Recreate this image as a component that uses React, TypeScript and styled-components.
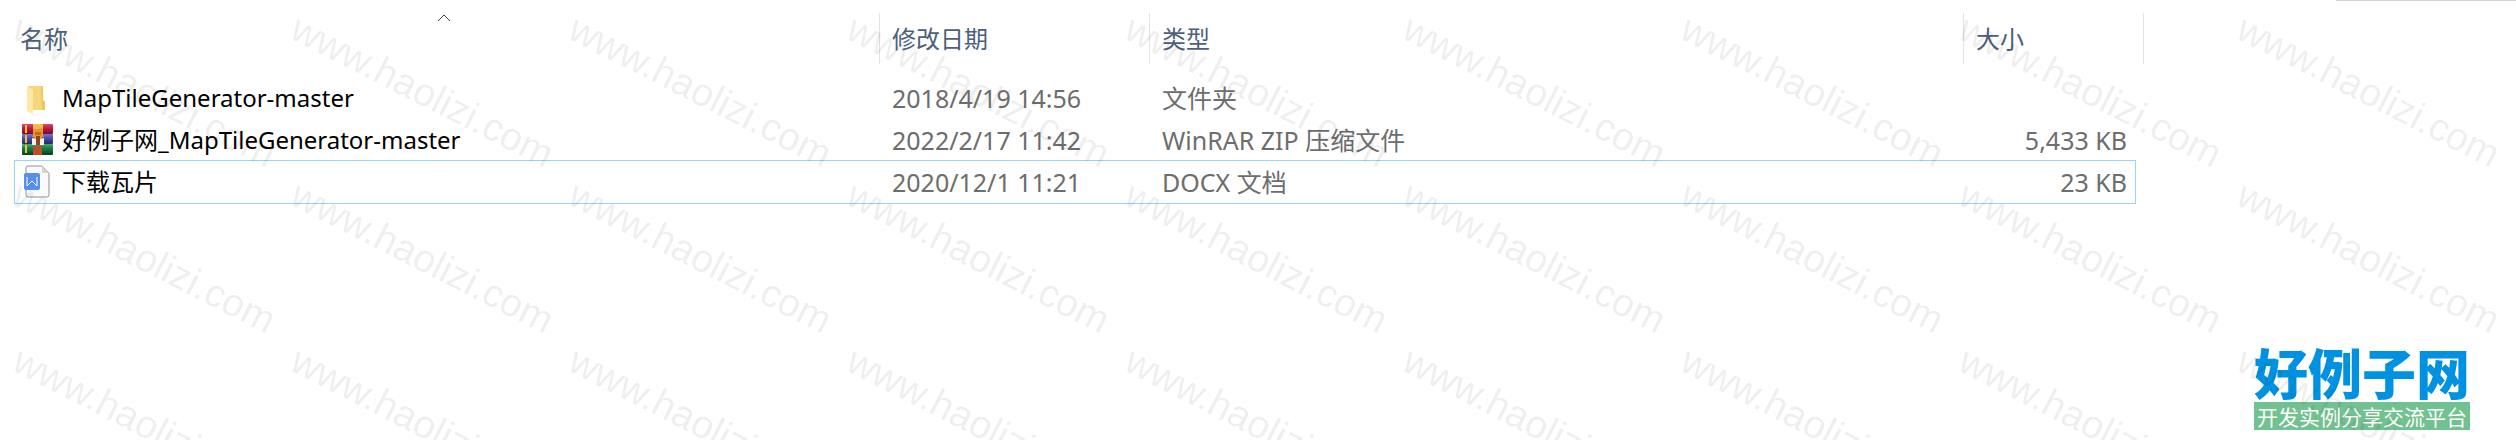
import React from "react";
import styled, { createGlobalStyle } from "styled-components";

const Global = createGlobalStyle`
  * { box-sizing: border-box; }
  body { margin: 0; background: #fff; overflow: hidden; font-family: "Noto Sans", "Noto Sans CJK SC", sans-serif; font-size: 24px; }
  a { color: inherit; text-decoration: none; }
`;
const Page = styled.main`
  position: relative;
  min-height: 100vh;
  overflow: hidden;
  display: flex;
  flex-direction: column;
`;
const TopEdge = styled.div`
  height: 1px;
  width: 180px;
  align-self: flex-end;
  background: #d4d4d4;
`;
const FileTable = styled.table`
  width: calc(100% - 386px);
  margin: 12px 0 0 14px;
  table-layout: fixed;
  border-collapse: separate;
  border-spacing: 0;
  line-height: 32px;
`;
const Col = styled.col<{ $width?: number }>`
  width: ${(p) => (p.$width ? `${p.$width}px` : "auto")};
`;
const HeadCell = styled.th<{ $first?: boolean }>`
  position: relative;
  height: 51px;
  padding: 0 0 0 ${(p) => (p.$first ? 6 : 12)}px;
  border-right: 1px solid #e2e2e2;
  text-align: left;
  font-weight: 400;
  color: #4c607a;
`;
const SortMark = styled.svg`
  position: absolute;
  top: 0;
  left: calc(50% - 10px);
`;
const Gap = styled.tr`
  height: 12px;
`;
const Cell = styled.td<{ $right?: boolean }>`
  height: 42px;
  padding: 2px ${(p) => (p.$right ? 9 : 0)}px 0 12px;
  text-align: ${(p) => (p.$right ? "right" : "left")};
  white-space: nowrap;
  font-size: 25px;
`;
const NameCell = styled(Cell)`
  padding: 2px 0 0 7px;
  font-size: 24px;
  color: #000;
`;
const Row = styled.tr<{ $focused?: boolean }>`
  color: #6d6d6d;
  ${(p) =>
    p.$focused &&
    `
    td { height: 44px; padding-top: 0; border: 0 solid #99d1ff; border-width: 1px 0; }
    td:first-child { border-left-width: 1px; padding-left: 6px; }
    td:last-child { border-right-width: 1px; padding-right: 8px; }
  `}
`;
const FileLink = styled.a`
  display: flex;
  align-items: center;
  gap: 9px;
`;
const Watermarks = styled.div`
  position: absolute;
  inset: 0;
  pointer-events: none;
  overflow: hidden;
  display: grid;
  grid-template-columns: repeat(9, 278px);
  grid-auto-rows: 166px;
  padding: 8px 0 0 25px;
`;
const Mark = styled.span`
  font: 39px/40px "Liberation Sans", Arial, sans-serif;
  color: rgba(0, 0, 0, 0.08);
  white-space: nowrap;
  transform: rotate(27deg);
  transform-origin: 0 0;
`;
const Logo = styled.a`
  position: absolute;
  right: 46px;
  bottom: 10px;
  width: 216px;
  font-family: "Noto Sans CJK SC", sans-serif;
  text-align: center;
`;
const LogoName = styled.div`
  font-size: 54px;
  line-height: 60px;
  font-weight: 900;
  color: #0092e1;
`;
const LogoTag = styled.div`
  background: #72c190;
  color: #fff;
  font-size: 21px;
  line-height: 28px;
`;

const FolderIcon = () => (
  <svg width="32" height="32" viewBox="0 0 32 32" aria-hidden="true">
    <path d="M7 4h15v14l2 2v8H7z" fill="#f5d67a" />
    <path d="M20 4h2v14l2 2v8h-3z" fill="#eec65f" />
    <path d="M6 4l6 4v24l-6-3z" fill="#ffe8a5" />
  </svg>
);
const ArchiveIcon = () => (
  <svg width="32" height="32" viewBox="0 0 32 32" aria-hidden="true">
    <defs>
      <linearGradient id="bookRed" x1="0" y1="0" x2="0" y2="1">
        <stop offset="0" stopColor="#e0467c" />
        <stop offset=".4" stopColor="#c01d3f" />
        <stop offset="1" stopColor="#7c0a20" />
      </linearGradient>
      <linearGradient id="bookBlue" x1="0" y1="0" x2="0" y2="1">
        <stop offset="0" stopColor="#7477cf" />
        <stop offset=".4" stopColor="#4b4fae" />
        <stop offset="1" stopColor="#27295f" />
      </linearGradient>
      <linearGradient id="bookGreen" x1="0" y1="0" x2="0" y2="1">
        <stop offset="0" stopColor="#3faa6c" />
        <stop offset=".4" stopColor="#177c43" />
        <stop offset="1" stopColor="#083d1d" />
      </linearGradient>
    </defs>
    <rect x="1" y="0" width="31" height="10" rx="1" fill="url(#bookRed)" />
    <rect x="1" y="10" width="31" height="10" rx="1" fill="url(#bookBlue)" />
    <rect x="1" y="20" width="31" height="11" rx="1" fill="url(#bookGreen)" />
    <path d="M5 1v8M5 11v8M5 21v8" stroke="#edc535" strokeWidth="2" />
    <rect x="12" y="0" width="10" height="6" fill="#e8c93c" />
    <rect x="12" y="22" width="9" height="9" fill="#b4532a" />
    <path d="M12 11V7a5 5 0 0 1 10 0v4l1 2h-2v8h-8v-8h-2z" fill="#e8932f" />
    <rect x="13" y="2" width="7" height="3" rx="1" fill="#f3b556" />
    <rect x="14" y="8" width="6" height="3" fill="#c46a20" />
    <path d="M11 14l4 1v6h-4zM19 15l4-1v7h-4z" fill="#f5f1f0" />
    <path d="M15 12h4v9h-4z" fill="#8d4420" />
  </svg>
);
const DocIcon = () => (
  <svg width="32" height="34" viewBox="0 0 32 34" aria-hidden="true">
    <path d="M7 1h14l7 7v22a2 2 0 0 1-2 2H7a2 2 0 0 1-2-2V3a2 2 0 0 1 2-2z" fill="#fafafa" stroke="#8f9296" />
    <path d="M21 1v7h7z" fill="#d5d5d5" />
    <rect x="3" y="8" width="16" height="17" rx="2" fill="#568ff0" />
    <path d="M6 12v9l5-5 5 5v-9" fill="none" stroke="#fff" />
  </svg>
);

const files = [
  { icon: <FolderIcon />, name: "MapTileGenerator-master", date: "2018/4/19 14:56", type: "文件夹", size: "" },
  { icon: <ArchiveIcon />, name: "好例子网_MapTileGenerator-master", date: "2022/2/17 11:42", type: "WinRAR ZIP 压缩文件", size: "5,433 KB" },
  { icon: <DocIcon />, name: "下载瓦片", date: "2020/12/1 11:21", type: "DOCX 文档", size: "23 KB", focused: true },
];

export default function App() {
  return (
    <Page>
      <Global />
      <TopEdge />
      <FileTable>
        <colgroup>
          <Col $width={866} />
          <Col $width={270} />
          <Col />
          <Col $width={172} />
          <Col $width={8} />
        </colgroup>
        <thead>
          <tr>
            <HeadCell $first scope="col">
              名称
              <SortMark width="14" height="10" aria-hidden="true">
                <path d="M1 8l6-6 6 6" fill="none" stroke="#444" />
              </SortMark>
            </HeadCell>
            <HeadCell scope="col">修改日期</HeadCell>
            <HeadCell scope="col">类型</HeadCell>
            <HeadCell scope="col" colSpan={2}>大小</HeadCell>
          </tr>
        </thead>
        <tbody>
          <Gap />
          {files.map((f) => (
            <Row key={f.name} $focused={f.focused}>
              <NameCell>
                <FileLink href="#">{f.icon}{f.name}</FileLink>
              </NameCell>
              <Cell>{f.date}</Cell>
              <Cell>{f.type}</Cell>
              <Cell $right>{f.size}</Cell>
            </Row>
          ))}
        </tbody>
      </FileTable>
      <Logo href="#">
        <LogoName>好例子网</LogoName>
        <LogoTag>开发实例分享交流平台</LogoTag>
      </Logo>
      <Watermarks aria-hidden="true">
        {Array.from({ length: 27 }, (_, i) => (
          <Mark key={i}>www.haolizi.com</Mark>
        ))}
      </Watermarks>
    </Page>
  );
}
